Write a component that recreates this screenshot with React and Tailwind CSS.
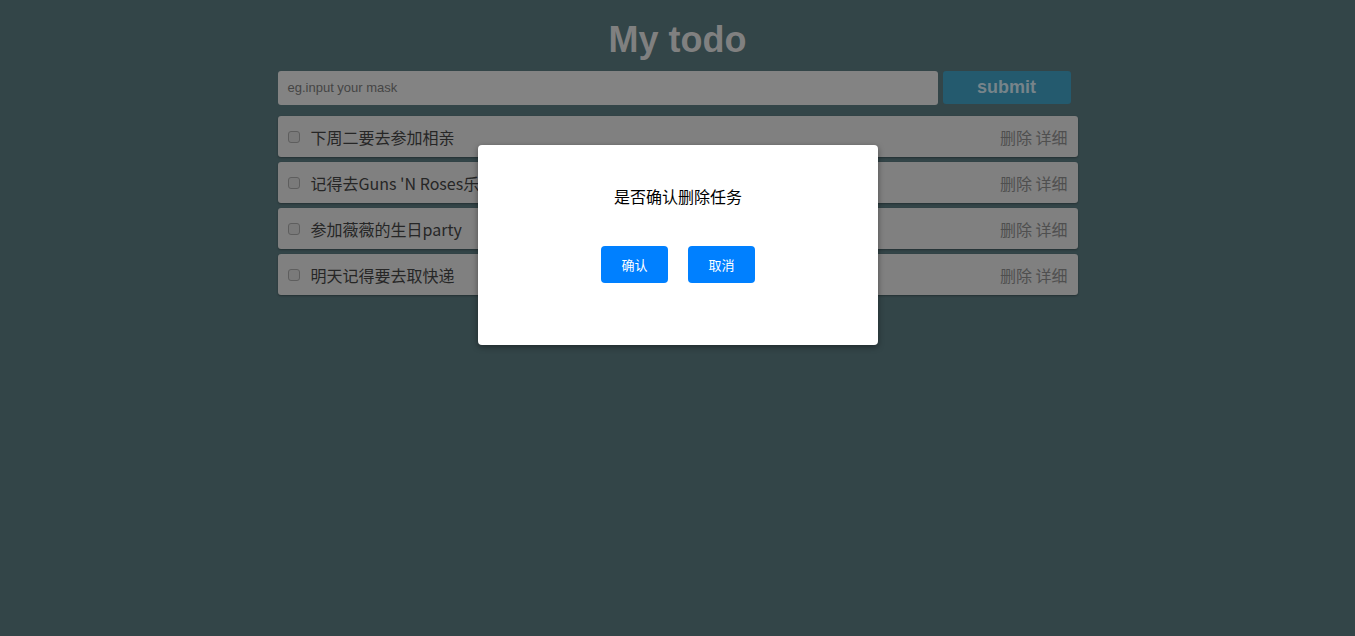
import React from "react";

const items = ["下周二要去参加相亲", "记得去Guns 'N Roses乐队演唱会", "参加薇薇的生日party", "明天记得要去取快递"];

export default function App() {
  return (
    <div className="relative min-h-[636px] w-full bg-[#334548]" style={{ fontFamily: '"Microsoft YaHei","Noto Sans CJK SC","Noto Sans",sans-serif' }}>
      <div className="mx-auto w-[800px] pt-[17px]">
        <h1 className="text-center text-[36px] font-bold leading-[46px] text-[#808080]" style={{ fontFamily: '"Liberation Sans","Noto Sans CJK SC",sans-serif' }}>My todo</h1>
        <div className="mt-[8px] flex h-[35px] gap-[5px]">
          <div className="flex h-[34px] w-[660px] items-center rounded-[3px] bg-[#838383] pl-[10px] text-[13px] text-[#454545]" style={{ fontFamily: '"Liberation Sans",sans-serif' }}>eg.input your mask</div>
          <div className="flex h-[33px] w-[128px] items-center justify-center rounded-[3px] bg-[#245a6e] text-[18px] font-bold text-[#77848a]" style={{ fontFamily: '"Liberation Sans",sans-serif' }}>submit</div>
        </div>
        <div className="mt-[10px] flex flex-col gap-[5px]">
          {items.map((t) => (
            <div key={t} className="flex h-[41px] items-center rounded-[3px] bg-[#808080] pl-[10px] pr-[10px] shadow-[0_1px_2px_rgba(0,0,0,0.3)]">
              <span className="h-[12px] w-[12px] rounded-[3px] border border-[#5e5e5e] bg-[#7a7a7a]" />
              <span className="ml-[11px] text-[16px] text-[#262626]">{t}</span>
              <span className="ml-auto text-[16px] text-[#4f4f4f]">删除 详细</span>
            </div>
          ))}
        </div>
      </div>
      <div className="absolute left-[478px] top-[145px] flex h-[200px] w-[400px] flex-col items-center rounded-[4px] bg-white shadow-[0_2px_6px_rgba(0,0,0,0.4)]">
        <p className="mt-[40px] text-[16px] leading-[22px] text-black">是否确认删除任务</p>
        <div className="mt-[39px] flex gap-[20px]">
          <button className="h-[37px] w-[67px] rounded-[4px] bg-[#0080ff] text-[13px] text-white">确认</button>
          <button className="h-[37px] w-[67px] rounded-[4px] bg-[#0080ff] text-[13px] text-white">取消</button>
        </div>
      </div>
    </div>
  );
}
